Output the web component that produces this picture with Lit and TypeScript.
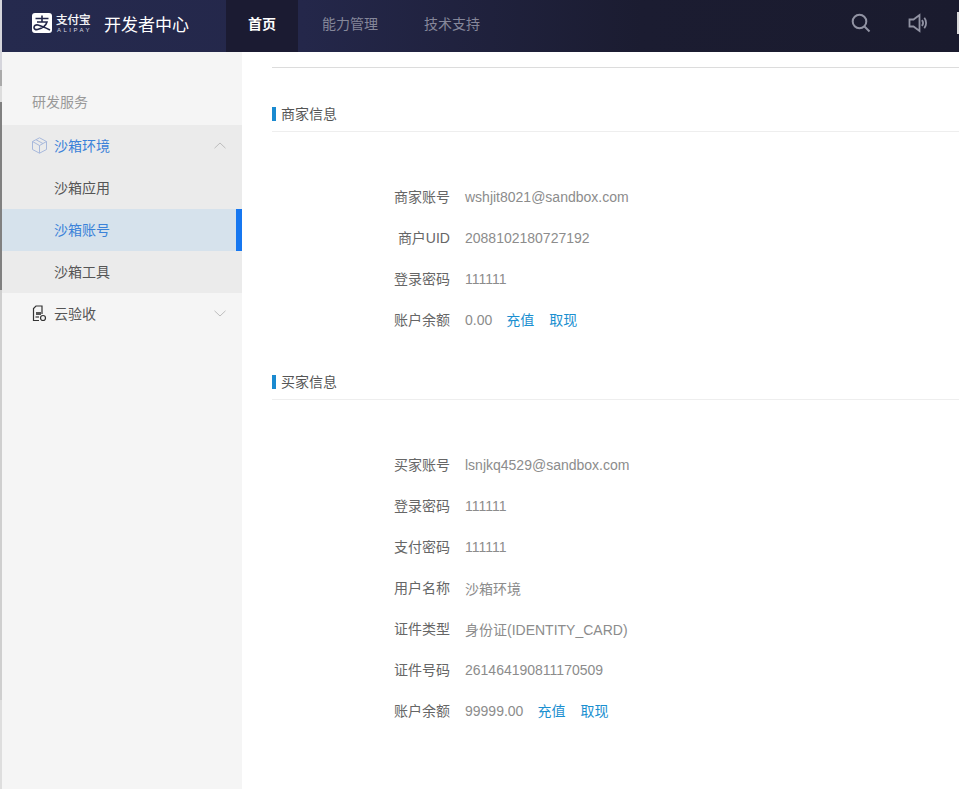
import { LitElement, html, css } from "lit";
import { customElement } from "lit/decorators.js";

type Row = { label: string; value: string; links?: boolean };

const merchant: Row[] = [
  { label: "商家账号", value: "wshjit8021@sandbox.com" },
  { label: "商户UID", value: "2088102180727192" },
  { label: "登录密码", value: "111111" },
  { label: "账户余额", value: "0.00", links: true },
];
const buyer: Row[] = [
  { label: "买家账号", value: "lsnjkq4529@sandbox.com" },
  { label: "登录密码", value: "111111" },
  { label: "支付密码", value: "111111" },
  { label: "用户名称", value: "沙箱环境" },
  { label: "证件类型", value: "身份证(IDENTITY_CARD)" },
  { label: "证件号码", value: "261464190811170509" },
  { label: "账户余额", value: "99999.00", links: true },
];

const chevron = (up: boolean) => html`<svg class="chev" viewBox="0 0 12 7" width="12" height="7">
  <path d=${up ? "M.5 6.2 6 1l5.500 5.200" : "M.5.8 6 6l5.500-5.200"} fill="none" stroke="#bdbdbd" stroke-width="1"/>
</svg>`;

@customElement("app-root")
export class AppRoot extends LitElement {
  static styles = css`
    :host {
      display: grid;
      grid-template-columns: 2px 1fr;
      grid-template-rows: 52px 1fr;
      height: 100vh;
      overflow: hidden;
      background: #fff;
      font-family: "Liberation Sans", "Noto Sans CJK SC", sans-serif;
      font-size: 14px;
      color: #555;
    }
    .strip {
      grid-row: 1 / 3;
      background: linear-gradient(#d5d5dc 0 70px, #aaaaaa 70px 86px, #dddddd 86px 102px, #808080 102px 290px, #cfcfcf 290px 700px, #dedede 700px);
    }
    header {
      display: flex;
      align-items: stretch;
      background: linear-gradient(90deg, #252a4e 0, #24274a 300px, #1b1c31 640px, #1a1b2e 100%);
      color: #fff;
      overflow: hidden;
    }
    .logo {
      display: flex;
      align-items: center;
      padding-left: 30px;
      width: 224px;
      box-sizing: border-box;
      flex: none;
      padding-bottom: 6px;
    }
    .mark { display: block; flex: none; }
    .brand {
      display: flex;
      flex-direction: column;
      margin-left: 4px;
      width: 34px;
      line-height: 1;
    }
    .brand b { font-size: 11.500px; font-weight: 400; -webkit-text-stroke: 0.250px #fff; white-space: nowrap; line-height: 14px; }
    .brand i { font-size: 6px; font-style: normal; letter-spacing: 2.500px; white-space: nowrap; line-height: 7px; color: #d8d9e2; padding-left: 1px; }
    .product { margin-left: 14px; font-size: 17px; white-space: nowrap; }
    nav { display: flex; gap: 2px; }
    nav a {
      display: flex;
      align-items: center;
      padding: 0 22px 6px;
      color: #85879a;
      white-space: nowrap;
    }
    nav a.on { background: #1b1b32; color: #fff; font-weight: 700; }
    .tools {
      margin-left: auto;
      display: flex;
      align-items: center;
      gap: 37px;
      padding-bottom: 6px;
    }
    .tools svg { display: block; }
    .avatar { width: 2px; height: 22px; background: #d9d9d9; margin-left: -8px; }
    .body { display: flex; min-height: 0; }
    aside {
      width: 240px;
      flex: none;
      background: #f5f5f5;
      padding-top: 31px;
      box-sizing: border-box;
    }
    .side-title { height: 42px; line-height: 38px; padding-left: 30px; color: #999; }
    .menu {
      display: flex;
      align-items: center;
      height: 42px;
      box-sizing: border-box;
      padding-left: 52px;
      padding-bottom: 2px;
      color: #555;
      position: relative;
    }
    .menu.group { background: #ebebeb; }
    .menu.blue { color: #3b82d9; }
    .menu.active { background: #d6e2ec; color: #3b82d9; }
    .menu.active::after {
      content: "";
      position: absolute;
      right: 0;
      top: 0;
      bottom: 0;
      width: 6px;
      background: #1677f0;
    }
    .menu.head { padding-left: 30px; gap: 7px; }
    .menu .chev { margin-left: auto; margin-right: 16px; }
    main { flex: 1; min-width: 0; padding-left: 30px; }
    .rule { height: 15px; border-bottom: 1px solid #dcdcdc; margin-bottom: 36px; }
    section { margin-top: 32px; }
    h2 {
      margin: 0 0 44px;
      font-size: 14px;
      font-weight: 400;
      line-height: 20px;
      height: 20px;
      padding-bottom: 7px;
      border-bottom: 1px solid #eeeeee;
      color: #555;
      display: flex;
      align-items: center;
      gap: 5px;
    }
    h2::before { content: ""; width: 4px; height: 14px; background: #1a8ad0; }
    .row { display: flex; align-items: center; height: 41px; }
    .label { width: 178px; text-align: right; color: #666; padding-bottom: 2px; }
    .value { margin-left: 15px; color: #8c8c8c; white-space: nowrap; }
    .link { color: #1a8fd0; margin-left: 15px; padding-bottom: 2px; }
    .value + .link { margin-left: 14px; }
  `;

  private rows(list: Row[]) {
    return list.map(
      (r) => html`<div class="row">
        <span class="label">${r.label}</span>
        <span class="value">${r.value}</span>
        ${r.links ? html`<span class="link">充值</span><span class="link">取现</span>` : ""}
      </div>`
    );
  }

  render() {
    return html`
      <div class="strip"></div>
      <header>
        <div class="logo">
          <svg class="mark" width="20" height="20" viewBox="0 0 20 20">
            <rect width="20" height="20" rx="3" fill="#fff"/>
            <path d="M3.500 5.500h13M10 2.500v6M5 9h10c-1 3.500-4 6-9.500 7.500-2 .5-3.500-.5-3.500-2 0-2 2-3 4-2.500 3 .7 7 2.500 12 5" fill="none" stroke="#23274a" stroke-width="1.600"/>
          </svg>
          <div class="brand"><b>支付宝</b><i>ALIPAY</i></div>
          <span class="product">开发者中心</span>
        </div>
        <nav>
          <a class="on">首页</a>
          <a>能力管理</a>
          <a>技术支持</a>
        </nav>
        <div class="tools">
          <svg width="20" height="20" viewBox="0 0 20 20" fill="none" stroke="#9193a3" stroke-width="2">
            <circle cx="8.500" cy="8.500" r="6.800"/><path d="m13.500 13.500 5 5"/>
          </svg>
          <svg width="20" height="20" viewBox="0 0 20 20" fill="none" stroke="#9193a3" stroke-width="1.800">
            <path d="M1.500 6.500h4l6-4.500v16l-6-4.500h-4z"/><path d="M14 7c1.300 1.800 1.300 4.200 0 6M16.300 4.800c2.400 3 2.400 7.400 0 10.400"/>
          </svg>
          <div class="avatar"></div>
        </div>
      </header>
      <div class="body">
        <aside>
          <div class="side-title">研发服务</div>
          <div class="menu head group blue">
            <svg width="15" height="17" viewBox="0 0 15 17" fill="none" stroke="#a8b9dc" stroke-width="1">
              <path d="M7.500.8 14.500 4.500v8l-7 3.700-7-3.700v-8zM.5 4.500l7 4 7-4M7.500 8.500v7.700M4 2.700l7 3.900"/>
            </svg>
            沙箱环境 ${chevron(true)}
          </div>
          <div class="menu group">沙箱应用</div>
          <div class="menu active">沙箱账号</div>
          <div class="menu group">沙箱工具</div>
          <div class="menu head">
            <svg width="15" height="17" viewBox="0 0 15 17" fill="none" stroke="#333" stroke-width="1.200">
              <path d="M7 15.500H1.500V3.500L4 1h6v8"/><path d="M4 7h5v3H4z" fill="#555" stroke="none"/><path d="M3.500 12H7"/><circle cx="11" cy="13" r="2.500"/>
            </svg>
            云验收 ${chevron(false)}
          </div>
        </aside>
        <main>
          <div class="rule"></div>
          <section><h2>商家信息</h2>${this.rows(merchant)}</section>
          <section><h2>买家信息</h2>${this.rows(buyer)}</section>
        </main>
      </div>
    `;
  }
}
